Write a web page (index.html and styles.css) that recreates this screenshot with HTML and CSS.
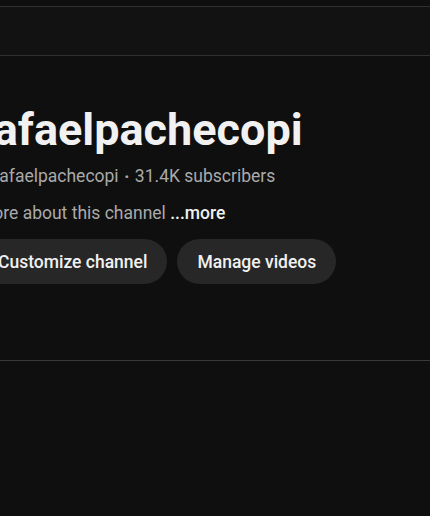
FILE: index.html
```html
<!DOCTYPE html>
<html>
<head>
<meta charset="utf-8">
<link rel="stylesheet" href="styles.css">
</head>
<body>
<div class="top-gap"></div>
<div class="band"></div>
<section class="channel">
  <h1 class="name">rafaelpachecopi</h1>
  <div class="meta">@rafaelpachecopi <span class="dot">‧</span> 31.4K subscribers</div>
  <div class="desc">More about this channel <span class="more">...more</span></div>
  <div class="actions">
    <button class="btn">Customize channel</button>
    <button class="btn">Manage videos</button>
  </div>
</section>
<div class="divider"></div>
</body>
</html>
```
FILE: styles.css
```css
html, body {
  margin: 0;
  padding: 0;
  background: #0f0f0f;
  overflow: hidden;
  font-family: Roboto, "Noto Sans", sans-serif;
}
.top-gap {
  height: 6px;
}
.band {
  height: 48px;
  background: #121212;
  border-top: 1px solid #303030;
  border-bottom: 1px solid #303030;
}
.channel {
  margin-left: -22px;
  padding-top: 47px;
  height: 304px;
  box-sizing: border-box;
}
.name {
  margin: 0;
  font-size: 45px;
  line-height: 54px;
  font-weight: 700;
  color: #f1f1f1;
  white-space: nowrap;
}
.meta {
  margin-top: 7px;
  font-size: 17.5px;
  line-height: 25px;
  color: #aaaaaa;
  white-space: nowrap;
}
.dot {
  margin: 0 1.5px;
  font-weight: 700;
}
.desc {
  margin-top: 12px;
  font-size: 17.5px;
  line-height: 25px;
  color: #aaaaaa;
  white-space: nowrap;
}
.more {
  color: #f1f1f1;
  font-weight: 500;
}
.actions {
  display: flex;
  gap: 10px;
  margin-top: 13px;
}
.btn {
  height: 45px;
  padding: 0 20px;
  border: 0;
  border-radius: 23px;
  background: #272727;
  color: #f1f1f1;
  font-family: Roboto, sans-serif;
  font-size: 17.5px;
  font-weight: 500;
  white-space: nowrap;
}
.divider {
  height: 1px;
  background: #3a3a3a;
}
```
